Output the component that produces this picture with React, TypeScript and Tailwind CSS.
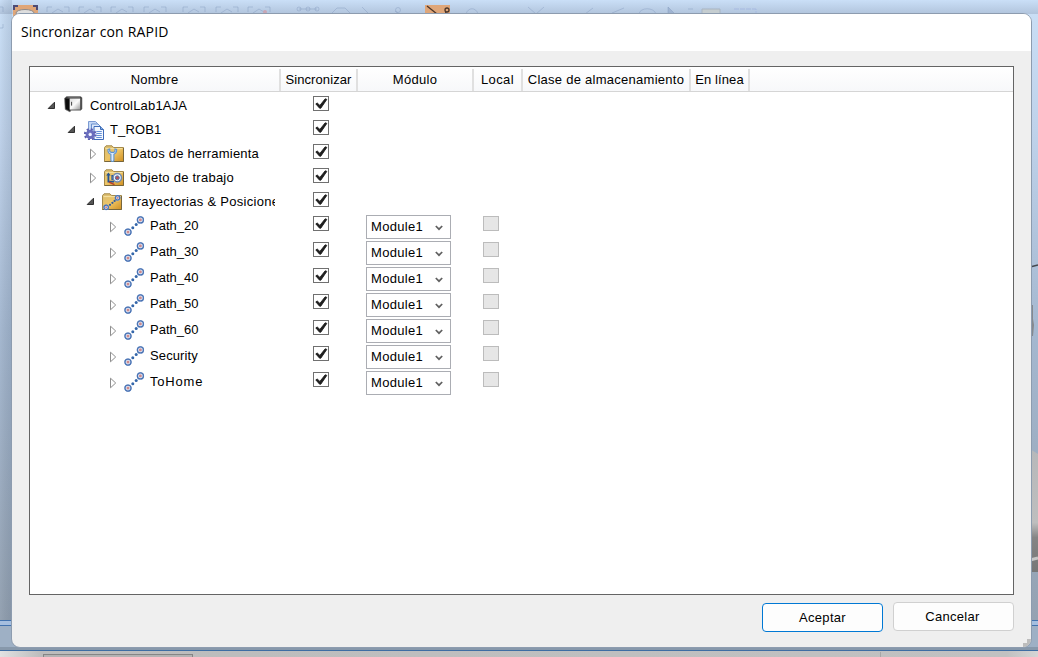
import React from "react";

type IconKind = "controller" | "task" | "tool" | "workobject" | "folderPath" | "path";

interface Row {
  label: string;
  icon: IconKind;
  open: boolean;
  arrowPad: string;
  iconBox: string;
  tracking: string;
  module?: string;
}

const pathRow = (label: string, tracking = "tracking-[0px]"): Row => ({
  label,
  icon: "path",
  open: false,
  arrowPad: "w-[79px]",
  iconBox: "w-[41px]",
  tracking,
  module: "Module1",
});

const rows: Row[] = [
  { label: "ControlLab1AJA", icon: "controller", open: true, arrowPad: "w-[17px]", iconBox: "w-[43px]", tracking: "tracking-[0.18px]" },
  { label: "T_ROB1", icon: "task", open: true, arrowPad: "w-[37px]", iconBox: "w-[43px]", tracking: "tracking-[0.15px]" },
  { label: "Datos de herramienta", icon: "tool", open: false, arrowPad: "w-[59px]", iconBox: "w-[41px]", tracking: "tracking-[0.2px]" },
  { label: "Objeto de trabajo", icon: "workobject", open: false, arrowPad: "w-[59px]", iconBox: "w-[41px]", tracking: "tracking-[0.25px]" },
  { label: "Trayectorias & Posiciones", icon: "folderPath", open: true, arrowPad: "w-[56px]", iconBox: "w-[43px]", tracking: "tracking-[0.29px]" },
  pathRow("Path_20"),
  pathRow("Path_30"),
  pathRow("Path_40"),
  pathRow("Path_50"),
  pathRow("Path_60"),
  pathRow("Security", "tracking-[0.12px]"),
  pathRow("ToHome", "tracking-[0.8px]"),
];

function Arrow({ row }: { row: Row }) {
  return row.open ? (
    <svg className="mt-[9px] shrink-0" width="9" height="9" viewBox="0 0 9 9">
      <path d="M7.5 1.2V7.5H1.2Z" fill="#555" stroke="#303030" />
    </svg>
  ) : (
    <svg className={row.module ? "mt-[9px] shrink-0" : "mt-[8px] shrink-0"} width="9" height="12" viewBox="0 0 9 12">
      <path d="M1.5 1.2L6.7 6L1.5 10.8Z" fill="#fff" stroke="#8e8e8e" />
    </svg>
  );
}

function Node({ x, y, r = 3.2 }: { x: number; y: number; r?: number }) {
  return (
    <g>
      <circle cx={x} cy={y} r={r + 0.5} fill="#8aa9d8" />
      <circle cx={x} cy={y} r={r - 0.2} fill="#dce4f3" stroke="#4a73b3" strokeWidth="1.2" />
      <circle cx={x} cy={y} r={r * 0.45} fill="#cf8a8c" />
    </g>
  );
}

function Folder() {
  return (
    <g>
      <path d="M.5 2.5L2 .8H8L9.5 2.5H19.5V16.5H.5Z" fill="url(#folderFill)" stroke="#a58a4a" />
      <path d="M1.5 3.6H18.5" stroke="#f6e3a4" />
      <path d="M.5 16.5H19.5V3" fill="none" stroke="#77663c" />
    </g>
  );
}

function RowIcon({ kind }: { kind: IconKind }) {
  switch (kind) {
    case "controller":
      return (
        <svg className="mt-[4px]" width="19" height="17" viewBox="0 0 19 17">
          <path d="M.5 2.2L2.6.6H16.5L18 1.6V13L16.8 14.2H7L6 15.9L1.2 13.4Z" fill="#3b3b3b" stroke="#777" strokeWidth=".6" />
          <path d="M1.3 2.6L5.6 3.2V14.8L1.8 12.8Z" fill="#0c0c0c" />
          <path d="M3 1.4H15.8L16.6 2.2H6.4Z" fill="#8f8f8f" />
          <rect x="5.7" y="2.6" width="10.6" height="11" fill="url(#cabinetFill)" />
          <path d="M7.6 5.8V9.6" stroke="#444" strokeWidth="1" />
          <path d="M17 3V12.8" stroke="#555" />
        </svg>
      );
    case "task":
      return (
        <svg className="mt-[5px]" width="21" height="20" viewBox="0 0 21 20">
          <path d="M4.5.5H11.5L13.5 2.5V11.5H4.5Z" fill="#c4d7f5" stroke="#7b9bd3" />
          <path d="M7.5 3H14L16 5V14H7.5Z" fill="#dce8fb" stroke="#6a8fcc" />
          <path d="M10 5.5H16.5L19.5 8.5V18.5H10Z" fill="#f2f7ff" stroke="#3f6bb8" />
          <path d="M16.5 5.5V8.5H19.5" fill="#86aee4" stroke="#3e6db6" />
          <path d="M12.3 10.5H17.8M12.3 12.5H17.8M12.3 14.5H17.8M12.3 16.5H17.8" stroke="#6590d6" />
          <circle cx="6.2" cy="13.4" r="5.1" fill="none" stroke="#5c5fb0" strokeWidth="2.4" strokeDasharray="2 2" />
          <circle cx="6.2" cy="13.4" r="3.2" fill="#a6abdf" stroke="#6a6dbd" strokeWidth="2.8" />
          <circle cx="6.2" cy="13.4" r="1.5" fill="#f4f5ff" />
        </svg>
      );
    case "tool":
      return (
        <svg className="mt-[5px]" width="20" height="18" viewBox="0 0 20 18">
          <Folder />
          <path d="M4 4.4C3.7 7 4.8 8.6 6.9 9.3V15.5C7.6 16.8 9.2 16.8 9.9 15.5V9.3C12 8.4 13 6.8 12.6 4.4L11 4V6.4L9.7 7.4H7.1L5.7 6.3V4Z" fill="#dcecff" stroke="#5f93cf" strokeWidth="1.1" />
        </svg>
      );
    case "workobject":
      return (
        <svg className="mt-[5px]" width="20" height="18" viewBox="0 0 20 18">
          <Folder />
          <path d="M4.4 5V12.6H10" fill="none" stroke="#245492" strokeWidth="1.8" />
          <path d="M2.2 6.4L4.4 3.6L6.6 6.4Z" fill="#245492" />
          <path d="M5 13L10.5 15.6" stroke="#b9402a" strokeWidth="1.6" />
          <path d="M8.2 6V11" stroke="#245492" strokeWidth="1.6" />
          <circle cx="13.3" cy="8.8" r="4.2" fill="#f2f6fd" stroke="#6d8ab4" strokeWidth="1.5" />
          <circle cx="13.3" cy="8.8" r="2" fill="#b8525c" stroke="#4e74a8" strokeWidth="1" />
        </svg>
      );
    case "folderPath":
      return (
        <svg className="mt-[5px]" width="20" height="18" viewBox="0 0 20 18">
          <Folder />
          <Node x={15.6} y={4.8} r={2.4} />
          <Node x={4.2} y={14.3} r={2.4} />
          <circle cx="8" cy="11.8" r="1.1" fill="#315d9e" />
          <circle cx="10.4" cy="9.8" r="1.1" fill="#315d9e" />
          <circle cx="12.6" cy="7.9" r="1.1" fill="#315d9e" />
        </svg>
      );
    default:
      return (
        <svg className="mt-[4px]" width="21" height="21" viewBox="0 0 21 21">
          <Node x={16.4} y={3.9} />
          <Node x={4} y={16.1} />
          <circle cx="8.8" cy="11.7" r="1.5" fill="#3567aa" />
          <circle cx="12.2" cy="8.5" r="1.5" fill="#3567aa" />
        </svg>
      );
  }
}

function Checked() {
  return (
    <div className="mt-[4px] ml-[32px] h-[15px] w-[16px] border border-[#707070] bg-white">
      <svg width="14" height="13" viewBox="0 0 14 13">
        <path d="M1.8 6.9L3.2 6L5.9 8.4L11.2 1.8L12.8 2.4L6.8 11.2H5.6Z" fill="#1e1e1e" stroke="#1e1e1e" strokeWidth=".9" />
      </svg>
    </div>
  );
}

function iconPadding(row: Row) {
  if (row.icon === "folderPath") return "pl-[7px]";
  return row.open ? "pl-[8px]" : "pl-[6px]";
}

function TreeRow({ row }: { row: Row }) {
  return (
    <div className={row.module ? "flex h-[26px]" : "flex h-[24px]"}>
      <div className="flex w-[245px] shrink-0 overflow-hidden">
        <div className={`${row.arrowPad} shrink-0`} />
        <Arrow row={row} />
        <div className={`${row.iconBox} h-[26px] shrink-0`}>
          <div className={iconPadding(row)}>
            <RowIcon kind={row.icon} />
          </div>
        </div>
        <span className={`${row.tracking} mt-[2px] -ml-[9px] h-[24px] leading-[24px] whitespace-nowrap`}>{row.label}</span>
      </div>
      <div className="w-[83px] shrink-0 pl-[6px]">
        <Checked />
      </div>
      {row.module && (
        <>
          <div className="w-[116px] shrink-0 pt-[3px] pl-[8px]">
            <button className="flex h-[24px] w-[85px] items-center justify-between border border-[#abadb3] bg-white pr-[7px] pl-[4px]">
              <span className="tracking-[0.3px]">{row.module}</span>
              <svg className="mt-px" width="8" height="6" viewBox="0 0 8 6">
                <path d="M.8 1L4 4.2L7.2 1" fill="none" stroke="#606060" strokeWidth="1.7" />
              </svg>
            </button>
          </div>
          <div className="pt-[4px] pl-[9px]">
            <div className="h-[15px] w-[16px] border border-[#bcbcbc] bg-[#e6e6e6]" />
          </div>
        </>
      )}
    </div>
  );
}

const columns = [
  { label: "Nombre", width: "w-[251px]", tracking: "tracking-[0.25px]" },
  { label: "Sincronizar", width: "w-[77px]", tracking: "tracking-[0.1px]" },
  { label: "Módulo", width: "w-[116px]", tracking: "tracking-[0.3px]" },
  { label: "Local", width: "w-[49px]", tracking: "tracking-[0.4px]" },
  { label: "Clase de almacenamiento", width: "w-[168px]", tracking: "tracking-[0.27px]" },
  { label: "En línea", width: "w-[59px]", tracking: "tracking-[0.1px]" },
];

function Backdrop() {
  const brackets = [52, 84, 116, 149, 188, 221, 253];
  return (
    <svg className="absolute inset-0" width="1038" height="657" viewBox="0 0 1038 657">
      <defs>
        <linearGradient id="sky" x2="0" y2="1">
          <stop stopColor="#cadff6" />
          <stop offset=".2" stopColor="#bfd2ea" />
          <stop offset=".5" stopColor="#a5b8d0" />
          <stop offset="1" stopColor="#929fae" />
        </linearGradient>
        <linearGradient id="topBar" x2="0" y2="1">
          <stop stopColor="#cadff7" />
          <stop offset="1" stopColor="#b1c4dc" />
        </linearGradient>
        <linearGradient id="leftShade">
          <stop stopColor="#000" stopOpacity="0" />
          <stop offset="1" stopColor="#1c3554" stopOpacity=".12" />
        </linearGradient>
        <linearGradient id="body" x2="0" y2="1">
          <stop stopColor="#b7b8ba" />
          <stop offset=".6" stopColor="#bebebe" />
          <stop offset=".72" stopColor="#858585" />
          <stop offset="1" stopColor="#777" />
        </linearGradient>
        <linearGradient id="status">
          <stop stopColor="#e2e2e2" />
          <stop offset=".04" stopColor="#bcbcbc" />
          <stop offset=".97" stopColor="#c1c1c1" />
          <stop offset="1" stopColor="#d5d5d5" />
        </linearGradient>
        <linearGradient id="folderFill" x2="1" y2="1">
          <stop stopColor="#d8bd74" />
          <stop offset=".5" stopColor="#eec566" />
          <stop offset="1" stopColor="#d08f20" />
        </linearGradient>
        <linearGradient id="cabinetFill" x2="1" y2="1">
          <stop stopColor="#ddd" />
          <stop offset=".5" stopColor="#fafafa" />
          <stop offset="1" stopColor="#999" />
        </linearGradient>
      </defs>
      <rect width="1038" height="657" fill="url(#sky)" />
      <rect width="1038" height="14" fill="url(#topBar)" />
      <rect width="12" height="657" fill="url(#leftShade)" />
      <g fill="none" stroke="#8095bb" strokeOpacity=".4">
        {brackets.map((x) => (
          <path key={x} d={`M${x - 5} 12V7H${x}M${x + 12} 7H${x + 17}V12M${x} 13L${x + 6} 9L${x + 11} 12`} />
        ))}
        <path d="M0 7H3V12M0 28H3V24" />
        <path d="M299 9H317M331 14L337 8H345L351 14M362 7L369 14M395 11L399 14M466 14C468 7 476 7 478 14M528 7L536 14L544 7M585 14L593 8M612 13L624 8M639 14C640 7 654 7 656 14M688 9H693" />
        <path d="M668 7L675 14H668Z" fill="#8095bb" fillOpacity=".4" />
        <circle cx="299" cy="9" r="2" />
        <circle cx="308" cy="9" r="2" />
        <circle cx="317" cy="9" r="2" />
        <circle cx="398" cy="10" r="2.5" />
      </g>
      <circle cx="265" cy="12" r="2" fill="#c9a6b4" />
      <rect x="13" y="5" width="25" height="18" fill="#dfa679" />
      <path d="M14 10V6H18M33 6H37V10" fill="none" stroke="#4d4b75" strokeWidth="2" />
      <ellipse cx="25" cy="13" rx="9" ry="3.5" fill="#dedede" stroke="#8e8988" />
      <rect x="425" y="5" width="25" height="10" fill="#dfa679" />
      <path d="M427 6L437 14M446 12L445 15" stroke="#493428" strokeWidth="1.3" />
      <circle cx="447" cy="10" r="2" fill="none" stroke="#493428" strokeWidth="1.3" />
      <path d="M702 14V9H720V14" fill="#c5cdd0" stroke="#a9b5c2" />
      <path d="M734 9H756V14" fill="none" stroke="#a6b9e1" strokeDasharray="5 1" />
      <path d="M1030 267L1038 265" stroke="#44484e" strokeWidth="1.4" />
      <path d="M1030 305H1033V319L1034 325L1033 336H1030Z" fill="#85898e" />
      <path d="M1030 449L1038 454V572H1030Z" fill="url(#body)" />
      <path d="M1030 560L1038 558" stroke="#c6c6c6" strokeWidth="3" />
      <rect y="620" width="1038" height="31" fill="#9eb0c5" />
      <path d="M0 620.5H1038M0 625.5H1038" stroke="#4272ae" />
      <rect y="621" width="1038" height="4" fill="#a5bedf" />
      <rect y="647" width="1038" height="3" fill="#8798ab" />
      <rect y="651" width="1038" height="6" fill="url(#status)" />
      <path d="M0 650.5H1038" stroke="#3e6da3" />
      <rect x="43.5" y="654.5" width="149" height="6" fill="#b4b3b3" stroke="#858585" />
      <path d="M880.5 652V657" stroke="#a7a7a7" />
    </svg>
  );
}

export default function App() {
  return (
    <main className="relative h-[657px] w-[1038px] overflow-hidden pt-[13px] pl-[11px] font-['Liberation_Sans',Arial,sans-serif] text-[13px] text-black">
      <Backdrop />
      <section className="relative flex h-[635px] w-[1021px] flex-col overflow-hidden rounded-[9px] border border-[#8d9caf] bg-[#efefef]">
        <header className="h-[37px] shrink-0 bg-white pl-[9px] font-['Open_Sans','Noto_Sans',sans-serif] text-[14px] leading-[36px]">
          <span className="tracking-[0.18px]">Sincronizar con RAPID</span>
        </header>
        <div className="mt-[15px] ml-[17px] h-[529px] w-[985px] shrink-0 border border-[#646464] bg-white">
          <div className="flex h-[25px] border-b border-[#d5d5d5] bg-linear-to-b from-white to-[#f7f8fa]">
            {columns.map((column) => (
              <div
                key={column.label}
                className={`${column.width} ${column.tracking} mt-[2px] shrink-0 border-r-2 border-[#e0e0e0] text-center leading-[22px] whitespace-nowrap`}
              >
                {column.label}
              </div>
            ))}
          </div>
          {rows.map((row) => (
            <TreeRow key={row.label} row={row} />
          ))}
        </div>
        <footer className="flex justify-end gap-[10px] pt-[7px] pr-[17px] tracking-[0.3px]">
          <button className="mt-px h-[29px] w-[121px] rounded-[4px] border border-[#0078d4] bg-[#fdfdfd]">Aceptar</button>
          <button className="h-[29px] w-[121px] rounded-[4px] border border-[#d0d0d0] bg-[#fdfdfd] pr-[2px]">Cancelar</button>
        </footer>
        <svg className="absolute right-0 bottom-0" width="9" height="9" viewBox="0 0 9 9">
          <path d="M5 1H9V9H1V5H5Z" fill="#bdbdbd" />
        </svg>
      </section>
    </main>
  );
}
